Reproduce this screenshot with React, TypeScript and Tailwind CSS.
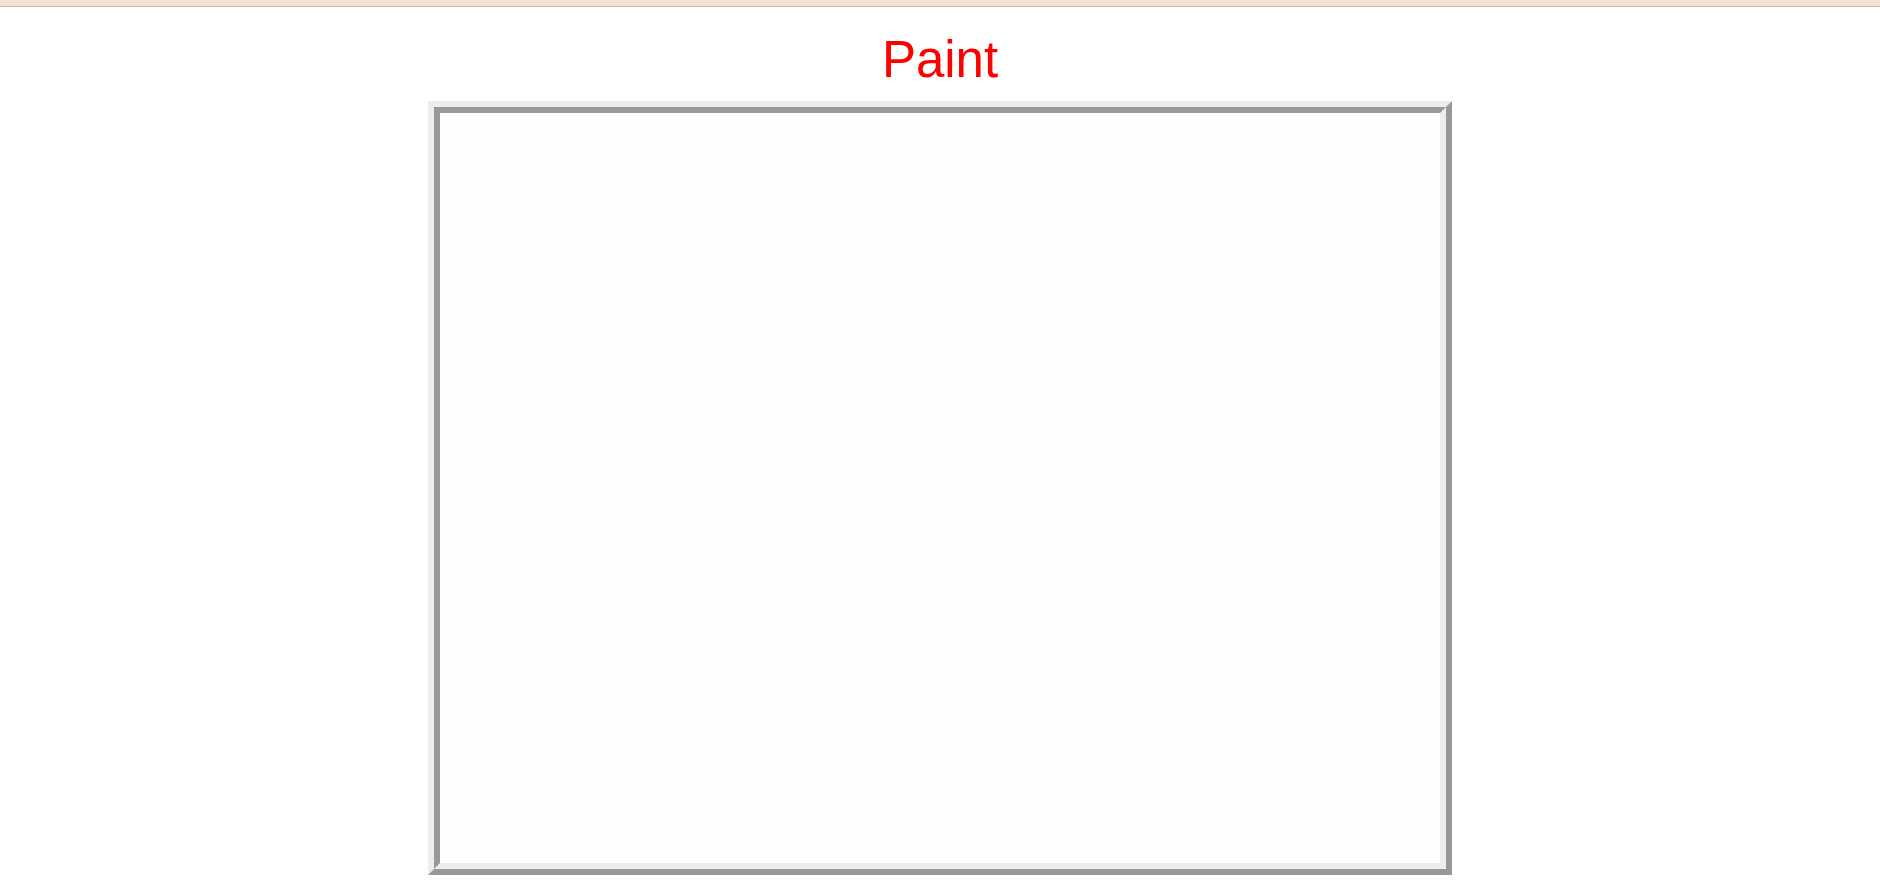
export default function App() {
  return (
    <div className="min-h-screen bg-white" style={{ fontFamily: '"Liberation Sans", Arial, sans-serif' }}>
      {/* top strip */}
      <div className="h-[7px] bg-[#f6dfd7] border-b border-[#c7b8b4]" />

      <h1 className="mt-[25px] text-center text-[51px] leading-[55px] text-[#ff0000] font-normal">Paint</h1>

      {/* canvas frame (ridge) */}
      <div className="mt-[14px] flex justify-center">
        <div className="border-[6px] border-t-[#ededed] border-l-[#ededed] border-r-[#999999] border-b-[#999999]">
          <div className="border-[6px] border-t-[#999999] border-l-[#999999] border-r-[#ededed] border-b-[#ededed]">
            <div className="w-[1000px] h-[750px] bg-[#fefefe]" />
          </div>
        </div>
      </div>
    </div>
  );
}
